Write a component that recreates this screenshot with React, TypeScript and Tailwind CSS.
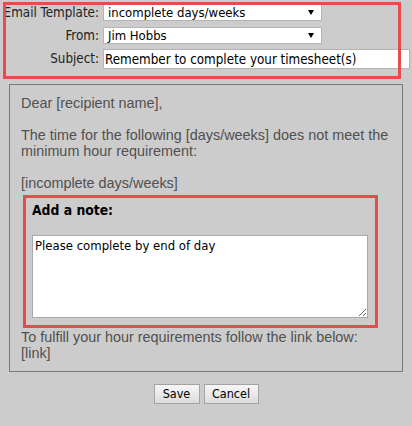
import { useState } from "react";

const ui = "font-['DejaVu_Sans_Condensed','DejaVu_Sans',sans-serif]";

const Arrow = () => (
  <svg width="6" height="5" viewBox="0 0 6 5" className="shrink-0">
    <polygon points="0,0 6,0 3,5" fill="#000" />
  </svg>
);

const FakeSelect = ({ value }: { value: string }) => (
  <div className="ml-[4px] flex h-[17px] w-[219px] items-center justify-between border border-[#b4b4b4] bg-white pl-[4px] pr-[7px] text-[13px] leading-none text-black">
    <span className="whitespace-nowrap">{value}</span>
    <Arrow />
  </div>
);

const Label = ({ children }: { children: string }) => (
  <div className="flex w-[93px] shrink-0 justify-end">
    <span className="shrink-0 whitespace-nowrap text-[13.3px] leading-none text-[#222]">
      {children}
    </span>
  </div>
);

export default function App() {
  const [subject, setSubject] = useState("Remember to complete your timesheet(s)");
  const [note, setNote] = useState("Please complete by end of day");

  return (
    <div className="min-h-[426px] w-[412px] bg-[#cccccc] pt-[5px]">
      {/* header fields, highlighted */}
      <div className={`ml-[6px] flex h-[71px] w-[392px] flex-col outline-[3px] outline-solid outline-[#e64c4c] ${ui}`}>
        <div className="-mt-px flex h-[17px] items-center">
          <Label>Email Template:</Label>
          <FakeSelect value="incomplete days/weeks" />
        </div>
        <div className="mt-[6px] flex h-[17px] items-center">
          <Label>From:</Label>
          <FakeSelect value="Jim Hobbs" />
        </div>
        <div className="mt-[5px] flex h-[20px] items-center">
          <Label>Subject:</Label>
          <input
            value={subject}
            onChange={(e) => setSubject(e.target.value)}
            className="ml-[4px] h-[20px] w-[307px] shrink-0 border border-[#b4b4b4] bg-white px-[1px] text-[13.3px] text-black outline-none"
          />
        </div>
      </div>

      {/* email body preview */}
      <div className="ml-[9px] mt-[8px] w-[394px] border border-[#7a7a7a] pb-[10px] pl-[11px] pt-[10px] font-['Liberation_Sans',Arial,sans-serif] text-[14.4px] leading-[16px] text-[#505050]">
        <p>Dear [recipient name],</p>
        <p className="mt-[16px]">
          The time for the following [days/weeks] does not meet the
          <br />
          minimum hour requirement:
        </p>
        <p className="mt-[16px]">[incomplete days/weeks]</p>

        <div className={`ml-[2px] mt-[4px] h-[133px] w-[355px] border-[3px] border-[#e64c4c] pl-[6px] pt-[4px] ${ui}`}>
          <div className="text-[13.8px] font-bold leading-[16px] text-black">Add a note:</div>
          <textarea
            value={note}
            onChange={(e) => setNote(e.target.value)}
            className="mt-[17px] block h-[83px] w-[336px] border border-[#a9a9a9] bg-white p-[2px] text-[13px] leading-[15px] text-black outline-none"
          />
        </div>

        <p className="mt-[1px]">
          To fulfill your hour requirements follow the link below:
          <br />
          [link]
        </p>
      </div>

      <div className={`ml-[9px] mt-[12px] flex w-[394px] justify-center gap-[4px] ${ui}`}>
        <button className="h-[20px] w-[46px] border border-[#a3a3a3] bg-linear-to-b from-[#f7f7f7] to-[#dcdcdc] text-[12.5px] leading-none text-black">
          Save
        </button>
        <button className="h-[20px] w-[55px] border border-[#a3a3a3] bg-linear-to-b from-[#f7f7f7] to-[#dcdcdc] text-[12.5px] leading-none text-black">
          Cancel
        </button>
      </div>
    </div>
  );
}
